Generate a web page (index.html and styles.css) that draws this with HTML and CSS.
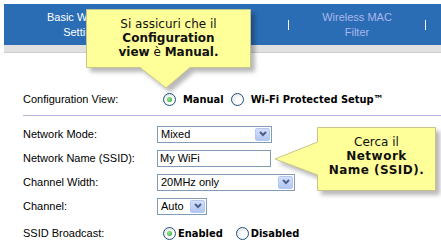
FILE: index.html
```html
<!DOCTYPE html>
<html lang="it">
<head>
  <meta charset="UTF-8">
  <title>Wireless Settings</title>
  <link rel="stylesheet" href="styles.css">
</head>
<body>
  <div class="page">
    <div class="tabs">
      <div class="tab">Basic Wireless<br>Settings</div><span class="sep"></span>
      <div class="tab"></div><span class="sep"></span>
      <div class="tab dim">Wireless MAC<br>Filter</div><span class="sep"></span>
    </div>
    <div class="tabs-edge"></div>

    <div class="form">
      <div class="row config">
        <span class="field-label">Configuration View:</span>
        <div class="choices">
          <span class="radio checked"></span><b>Manual</b>
          <span class="radio"></span><b>Wi-Fi Protected Setup™</b>
        </div>
      </div>
      <hr class="rule">

      <div class="row">
        <span class="field-label">Network Mode:</span>
        <div class="select w-mode"><span>Mixed</span><span class="btn"><svg width="8" height="6" viewBox="0 0 8 6"><path d="M1 1 L4 4 L7 1" fill="none" stroke="#4d6185" stroke-width="2"/></svg></span></div>
      </div>
      <div class="row">
        <span class="field-label">Network Name (SSID):</span>
        <div class="input">My WiFi</div>
      </div>
      <div class="row">
        <span class="field-label">Channel Width:</span>
        <div class="select w-width"><span>20MHz only</span><span class="btn"><svg width="8" height="6" viewBox="0 0 8 6"><path d="M1 1 L4 4 L7 1" fill="none" stroke="#4d6185" stroke-width="2"/></svg></span></div>
      </div>
      <div class="row">
        <span class="field-label">Channel:</span>
        <div class="select w-chan"><span>Auto</span><span class="btn"><svg width="8" height="6" viewBox="0 0 8 6"><path d="M1 1 L4 4 L7 1" fill="none" stroke="#4d6185" stroke-width="2"/></svg></span></div>
      </div>
      <div class="row ssid">
        <span class="field-label">SSID Broadcast:</span>
        <div class="choices">
          <span class="radio checked"></span><b>Enabled</b>
          <span class="radio"></span><b>Disabled</b>
        </div>
      </div>
    </div>

    <!-- callouts sit on top of the form -->
    <div class="callout callout-top">
      <svg width="165" height="59"><path d="M0.5 0.5 H164.5 V58.5 H104 L80 79 L54 58.5 H0.5 Z"/></svg>
      <p>Si assicuri che il<br><b>Configuration</b><br><b>view</b> è <b>Manual.</b></p>
    </div>
    <div class="callout callout-side">
      <svg width="119" height="64"><path d="M0.5 0.5 H118.5 V63.5 H0.5 V48 L-42 32 L0.5 15 Z"/></svg>
      <p>Cerca il<br><b>Network</b><br><b>Name (SSID).</b></p>
    </div>
  </div>
</body>
</html>
```

FILE: styles.css
```css
body {
  margin: 0;
  font-family: "Liberation Sans", Arial, sans-serif;
  font-size: 11px;
  color: #000;
  background: #fff;
}
.page {
  position: relative;
  width: 441px;
  height: 245px;
  padding-top: 4px;
  box-sizing: border-box;
  overflow: hidden;
}
.tabs {
  margin-left: 4px;
  height: 41px;
  background: #2b6db5;
  display: flex;
  align-items: center;
  padding-left: 11px;
}
.tab {
  width: 136px;
  text-align: center;
  line-height: 15px;
  color: #fff;
}
.tab.dim {
  color: #aab6ee;
}
.sep {
  width: 1px;
  height: 10px;
  background: #fff;
}
.tabs-edge {
  margin-left: 4px;
  height: 7px;
  background: #e1e1e1;
  border-bottom: 1px solid #cdcdcd;
}
.form {
  padding-left: 23px;
  margin-top: 38px;
}
.row {
  display: flex;
  align-items: center;
  height: 24px;
}
.row.config {
  height: 16px;
}
.row.ssid {
  margin-top: 3px;
}
.field-label {
  width: 134px;
  flex: none;
}
.rule {
  margin: 8px 0 6px;
  border: 0;
  border-top: 1px solid #b7b7e4;
  height: 0;
}
.choices {
  display: flex;
  align-items: center;
  padding-left: 6px;
}
.choices b {
  font-family: "DejaVu Sans Condensed", "DejaVu Sans", sans-serif;
  font-size: 11px;
  font-weight: bold;
  margin: 0 7px;
}
.ssid .choices b {
  margin: 0 13px 0 2px;
}
.radio {
  position: relative;
  flex: none;
  width: 13px;
  height: 13px;
  box-sizing: border-box;
  border-radius: 50%;
  border: 1px solid #1d5281;
  background: radial-gradient(circle at 65% 65%, #fff 25%, #dcdcd6 100%);
}
.radio.checked::after {
  content: "";
  position: absolute;
  left: 3px;
  top: 3px;
  width: 5px;
  height: 5px;
  border-radius: 50%;
  background: radial-gradient(circle at 40% 40%, #9be89b, #1e9e1e);
}
.select, .input {
  box-sizing: border-box;
  height: 17px;
  border: 1px solid #7f9db9;
  background: #fff;
  display: flex;
  align-items: center;
}
.select {
  justify-content: space-between;
  padding: 0 1px 0 3px;
}
.input {
  width: 114px;
  padding-left: 2px;
}
.w-mode { width: 115px; }
.w-width { width: 138px; }
.w-chan { width: 50px; }
.btn {
  box-sizing: border-box;
  width: 15px;
  height: 13px;
  border: 1px solid #b5c7f0;
  border-radius: 2px;
  background: linear-gradient(#d3defd, #b3c7f5);
  display: flex;
  align-items: center;
  justify-content: center;
}
.callout {
  position: absolute;
  box-sizing: border-box;
  padding-top: 8px;
  text-align: center;
  font-family: "DejaVu Sans", Verdana, sans-serif;
  font-size: 12px;
  line-height: 14px;
  color: #111;
}
.callout svg {
  position: absolute;
  left: 0;
  top: 0;
  overflow: visible;
  filter: drop-shadow(4px 4px 2px rgba(0, 0, 0, 0.28));
}
.callout path {
  fill: #ffff99;
  stroke: #c4c48c;
  stroke-width: 1;
}
.callout p {
  position: relative;
  margin: 0;
}
.callout-top {
  left: 86px;
  top: 9px;
  width: 165px;
  height: 59px;
}
.callout-side {
  left: 317px;
  top: 127px;
  width: 119px;
  height: 64px;
}
.callout-side b {
  letter-spacing: 0.5px;
}
```
